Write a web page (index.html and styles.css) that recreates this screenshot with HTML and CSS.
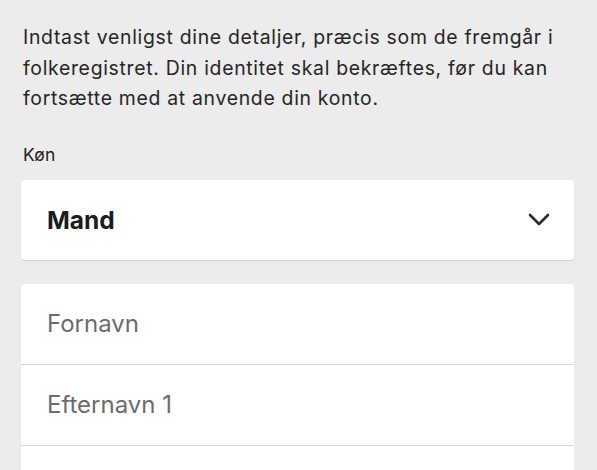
FILE: index.html
```html
<!DOCTYPE html>
<html lang="da">
<head>
<meta charset="utf-8">
<link rel="stylesheet" href="styles.css">
</head>
<body>
<main class="page">
  <p class="intro">Indtast venligst dine detaljer, præcis som de fremgår i folkeregistret. Din identitet skal bekræftes, før du kan fortsætte med at anvende din konto.</p>
  <div class="label">Køn</div>
  <div class="select">
    <span class="select-value">Mand</span>
    <svg class="chevron" width="22" height="14" viewBox="0 0 22 14"><path d="M2 2 L11 11 L20 2" fill="none" stroke="#2b2b2b" stroke-width="2.6" stroke-linecap="round" stroke-linejoin="round"/></svg>
  </div>
  <div class="fields">
    <div class="field">Fornavn</div>
    <div class="field">Efternavn 1</div>
    <div class="field"></div>
  </div>
</main>
</body>
</html>
```
FILE: styles.css
```css
html, body {
  margin: 0;
  padding: 0;
  background: #ebeceb;
}
body {
  font-family: Inter, "Noto Sans", sans-serif;
  color: #222;
}
.page {
  padding: 22px 23px 0 21px;
}
.intro {
  margin: 0;
  padding-left: 2px;
  font-size: 19.4px;
  line-height: 30.5px;
  letter-spacing: 0.7px;
  color: #262626;
}
.label {
  margin-top: 31px;
  padding-left: 2px;
  font-size: 17.5px;
  line-height: 20px;
  letter-spacing: 0.2px;
}
.select {
  margin-top: 15px;
  height: 80px;
  background: #fff;
  border-radius: 4px;
  box-shadow: 0 1px 1px rgba(0,0,0,0.12);
  display: flex;
  align-items: center;
  justify-content: space-between;
  padding: 0 24px 0 26px;
}
.select-value {
  font-size: 24.5px;
  font-weight: 700;
  color: #1c1c1c;
}
.chevron {
  display: block;
}
.fields {
  margin-top: 24px;
  background: #fff;
  border-radius: 4px 4px 0 0;
}
.field {
  height: 80px;
  border-bottom: 1px solid #d9d9d9;
  display: flex;
  align-items: center;
  padding-left: 26px;
  font-size: 24px;
  color: #6c6c6c;
}
```
